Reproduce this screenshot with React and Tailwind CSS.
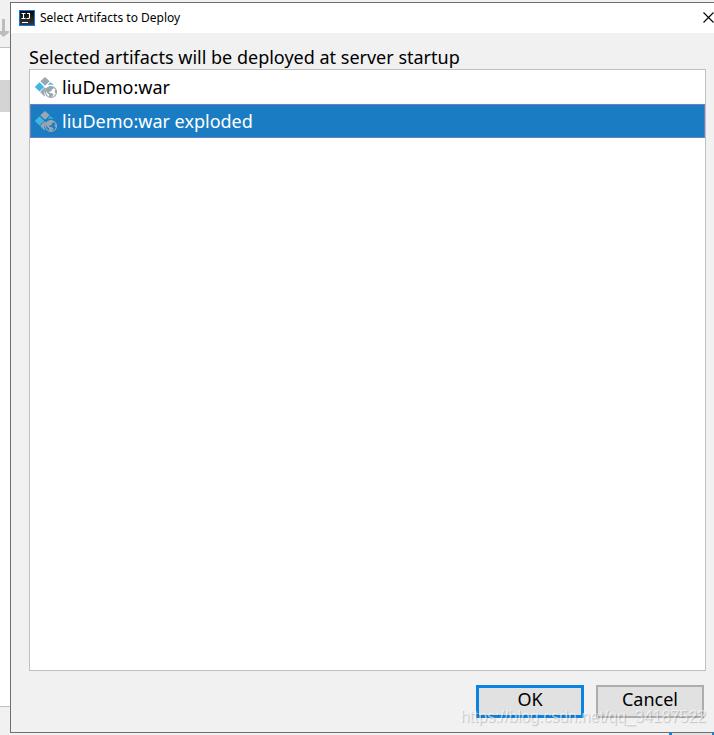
import { useState } from "react";

const artifacts = ["liuDemo:war", "liuDemo:war exploded"];

function IdeaLogo() {
  return (
    <svg width="16" height="16" viewBox="0 0 16 16" aria-hidden="true">
      <defs>
        <linearGradient id="logo" x1="0" y1="0" x2="0" y2="1">
          <stop offset="0" stopColor="#050505" />
          <stop offset="1" stopColor="#3a3a3a" />
        </linearGradient>
      </defs>
      <rect x=".5" y=".5" width="15" height="15" fill="url(#logo)" stroke="#0a78e8" />
      <path d="M2.500 3.500h4M4.500 3.500v5M2.500 8.500h4M8 3.500h2.500v4q0 1-1 1H7.500" fill="none" stroke="#fff" strokeWidth="1.100" />
      <path d="M3 12.500h6" stroke="#fff" />
    </svg>
  );
}

function ArtifactIcon({ selected }) {
  return (
    <svg width="24" height="24" viewBox="0 -1 24 24" aria-hidden="true" className="shrink-0">
      <path d="M11 1l4.700 4.300L11 9.700 6.300 5.300z" fill="#9aa7b0" />
      <path d="M5.500 6.300l4.700 4.600-4.700 4.600L.8 10.900z" fill="#40b6e0" />
      <path d="M13.500 9l3-2.800 3.300 2.900q-3.300-.9-6.300-.1z" fill="#40b6e0" />
      <path d="M10.700 11.300l1.400 1.300q-2.600 3.200-1.200 7.400l-.4.400-4.400-4.400z" fill="#9aa7b0" />
      <circle cx="17" cy="16" r="5.500" fill={selected ? "#1a7dc4" : "#fff"} stroke="#9aa7b0" strokeWidth="1.200" />
      <path d="M11.600 14.500q1.200-3.800 5-4.200l3.500.9-.7 1.600-1.700.7.2 1.400-2.200.6-.6 1.200 3 .6 1.600 1.200-1.600 2-1.200 1.200-1.800-1.200v-2l-1.300-1z" fill="#9aa7b0" />
      <path d="M20.700 14l1.600.7.1 2.800-1.700-1.200z" fill="#9aa7b0" />
    </svg>
  );
}

function Backdrop() {
  return (
    <div className="w-[10px] shrink-0 flex flex-col overflow-hidden" aria-hidden="true">
      <div className="h-12 shrink-0 flex items-end border-b border-[#c0c0c0] bg-[#f1f1f1] pb-2">
        <svg width="10" height="20" viewBox="0 0 10 20">
          <path d="M2 0h3v12h4v1.500L3.500 18 0 15V12h2z" fill="#bdbdbd" />
        </svg>
      </div>
      <div className="h-8 shrink-0 bg-white" />
      <div className="h-8 shrink-0 bg-[#d4d4d4]" />
      <div className="grow bg-white" />
      <div className="h-[27px] shrink-0 border-t border-[#c0c0c0]" />
    </div>
  );
}

export default function App() {
  const [selected, setSelected] = useState(1);
  return (
    <div className="relative h-screen flex flex-col overflow-hidden bg-[#f1f1f1] text-black font-['Noto_Sans','Open_Sans',sans-serif]">
      <div className="flex grow min-h-0">
        <Backdrop />
        <main role="dialog" aria-labelledby="title" className="mt-0.5 grow min-w-0 flex flex-col border-l border-t border-b border-[#6e6e6e] bg-[#f1f1f1]">
          <header className="h-[30px] shrink-0 flex items-center bg-white pl-2">
            <IdeaLogo />
            <h1 id="title" className="ml-[5px] grow text-[12px] leading-4">Select Artifacts to Deploy</h1>
            <button type="button" aria-label="Close" className="w-[11px] pb-0.5">
              <svg width="11" height="11" viewBox="0 0 11 11" className="block">
                <path d="M.5.5l10 10M10.500.5L.5 10.500" stroke="#000" strokeWidth="1.100" />
              </svg>
            </button>
          </header>
          <section className="grow min-h-0 flex flex-col pl-[18px] pr-2 pt-3 pb-3.5">
            <h2 id="list-label" className="h-6 shrink-0 text-[18px] leading-6 whitespace-nowrap">
              Selected artifacts will be deployed at server startup
            </h2>
            <div role="listbox" aria-labelledby="list-label" className="grow flex flex-col border border-[#c0c0c0] bg-white">
              {artifacts.map((name, i) => (
                <button
                  key={name}
                  type="button"
                  role="option"
                  aria-selected={i === selected}
                  onClick={() => setSelected(i)}
                  className={
                    "h-[34px] shrink-0 flex items-center gap-1 border pl-[3px] text-left text-[18px] leading-6 " +
                    (i === selected ? "border-[#6c7fc4] bg-[#1a7dc4] text-white" : "border-transparent")
                  }
                >
                  <ArtifactIcon selected={i === selected} />
                  {name}
                </button>
              ))}
            </div>
            <div className="mt-3.5 flex shrink-0 justify-end gap-3 pr-0.5">
              <button type="button" className="h-[33px] w-[108px] border-3 border-[#0a84e0] bg-[#e1e1e1] pb-1.5 text-[18px] leading-4">OK</button>
              <button type="button" className="h-[33px] w-[108px] border-2 border-[#adadad] bg-[#e1e1e1] pb-1.5 text-[18px] leading-4">Cancel</button>
            </div>
          </section>
        </main>
      </div>
      <div className="h-0.5 shrink-0 flex justify-end bg-[#f1f1f1]" aria-hidden="true">
        <div className="w-[45px] border-l-3 border-r-2 border-[#0a84e0] bg-[#e1e1e1]" />
      </div>
      <p className="pointer-events-none absolute bottom-2.5 right-2 font-['Liberation_Sans',Arial,sans-serif] text-[16px] leading-4 text-white/60 [text-shadow:1px_1px_1px_rgba(0,0,0,0.2)]">
        https://blog.csdn.net/qq_34187522
      </p>
    </div>
  );
}
